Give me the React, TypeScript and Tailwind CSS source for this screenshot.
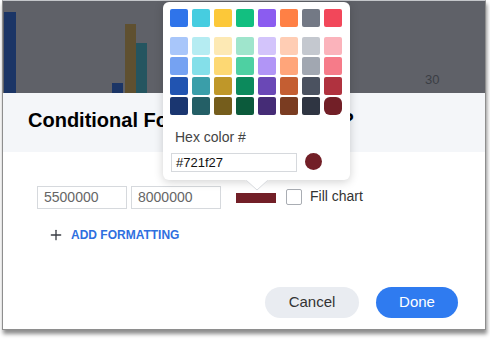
import { Plus } from 'lucide-react'

const TOP_ROW = ['#2f74ea', '#46cde0', '#fcc839', '#12bf80', '#8b5cf0', '#ff8045', '#737985', '#f2475a']

const SHADES = [
  ['#a8c6fa', '#b5ecf2', '#fde9b4', '#9fe5cc', '#d3c4fb', '#ffcdb4', '#c4c8cf', '#fbb3bb'],
  ['#75a2f2', '#84dfe9', '#fdd873', '#4ed0a2', '#b195f6', '#ffa57a', '#a1a7b1', '#f67b89'],
  ['#2154b1', '#3a9ea9', '#bf9729', '#0c8a5c', '#6a48b6', '#c45e32', '#4b5260', '#b0323f'],
  ['#1a3670', '#245f66', '#755d1c', '#0b5a3b', '#452c76', '#7a3c21', '#2f3542', '#721f27'],
]

const SELECTED = '#721f27'

// ── Color popover ─────────────────────────────────────────────────────────────

function ColorPopover() {
  return (
    <div className="absolute left-[163px] top-[2px] w-[187px] h-[178px] bg-white rounded-[6px] shadow-[0_2px_10px_rgba(0,0,0,0.18)] pt-[7px] pl-[7px]">
      <div className="grid grid-cols-[repeat(8,18px)] gap-x-[4px]">
        {TOP_ROW.map(c => (
          <div key={c} className="h-[18px] rounded-[2px]" style={{ background: c }} />
        ))}
      </div>
      <div className="grid grid-cols-[repeat(8,18px)] gap-x-[4px] gap-y-[2px] mt-[10px]">
        {SHADES.flat().map(c => (
          <div
            key={c}
            className={c === SELECTED ? 'h-[18px] rounded-[6px]' : 'h-[18px] rounded-[2px]'}
            style={{ background: c }}
          />
        ))}
      </div>
      <p className="mt-[13px] pl-[5px] text-[14px] leading-[18px] text-[#444]">Hex color #</p>
      <div className="mt-[7px] pl-[1px] flex items-center gap-[8px]">
        <div className="w-[126px] h-[19px] border border-[#d6d9dd] flex items-center pl-[4px] text-[13px] text-[#111]">
          #721f27
        </div>
        <div className="w-[17px] h-[17px] rounded-full -mt-[3px]" style={{ background: SELECTED }} />
      </div>
      {/* caret */}
      <svg className="absolute left-[82px] top-[177px]" width="24" height="12" viewBox="0 0 24 12">
        <path d="M1 1 L12 11 L23 1" fill="#fff" stroke="#d8dbdf" strokeWidth="1" />
        <rect x="0" y="0" width="24" height="1.2" fill="#fff" />
      </svg>
    </div>
  )
}

// ── Page ──────────────────────────────────────────────────────────────────────

export default function App() {
  return (
    <div className="relative w-[490px] h-[339px] bg-white overflow-hidden font-['Liberation_Sans',Arial,sans-serif]">
      <div className="ml-[2px] w-[484px] h-[330px] border-x border-b border-t border-[#8e8e8e] border-t-[#c4c6ca] shadow-[1px_4px_4px_rgba(0,0,0,0.45)] flex flex-col bg-white">
        {/* Dimmed chart behind the dialog */}
        <div className="relative h-[92px] bg-[#5f6168] shrink-0">
          <svg className="absolute left-0 top-0" width="482" height="92">
            <rect x="1" y="11" width="12" height="81" fill="#1b3566" />
            <rect x="109" y="82" width="11" height="10" fill="#1b3566" />
            <rect x="122" y="23" width="11" height="69" fill="#5f5030" />
            <rect x="133" y="42" width="11" height="50" fill="#245560" />
          </svg>
          <span className="absolute left-[422px] top-[69px] text-[13px] text-[#3b3e45]">30</span>
        </div>

        {/* Dialog header */}
        <div className="h-[59px] bg-[#f4f6f9] pl-[25px] pt-[13px] flex shrink-0">
          <span className="inline-block w-[314px] text-[20px] leading-[28px] font-bold text-black whitespace-nowrap">
            Conditional Formatting
          </span>
          <span className="text-[20px] leading-[28px] font-bold text-black">?</span>
        </div>

        {/* Dialog body */}
        <div className="flex-1 flex flex-col pl-[34px] pt-[34px]">
          <div className="flex items-center h-[23px]">
            <div className="w-[90px] h-[23px] border border-[#d6d9dd] flex items-center pl-[6px] text-[14px] text-[#666]">
              5500000
            </div>
            <div className="ml-[4px] w-[90px] h-[23px] border border-[#d6d9dd] flex items-center pl-[6px] text-[14px] text-[#666]">
              8000000
            </div>
            <div className="ml-[15px] w-[40px] h-[10px]" style={{ background: SELECTED }} />
            <div className="ml-[10px] w-[16px] h-[16px] border border-[#a9adb3] rounded-[2px] -mt-[1px]" />
            <span className="ml-[8px] text-[14px] text-[#333] -mt-[2px]">Fill chart</span>
          </div>

          <div className="mt-[17px] pl-[11px] flex items-center h-[18px] gap-[7px]">
            <Plus className="w-[16px] h-[16px] text-[#3a3d44]" strokeWidth={2} />
            <span className="text-[12px] font-bold text-[#2f6fdf]">ADD FORMATTING</span>
          </div>

          <div className="mt-[43px] pr-[27px] flex justify-end gap-[17px]">
            <button type="button" className="w-[94px] h-[31px] rounded-full bg-[#e9ecf1] text-[15px] text-[#333]">
              Cancel
            </button>
            <button type="button" className="w-[82px] h-[31px] rounded-full bg-[#2f7bf0] text-[15px] text-white">
              Done
            </button>
          </div>
        </div>
      </div>

      <ColorPopover />
    </div>
  )
}
